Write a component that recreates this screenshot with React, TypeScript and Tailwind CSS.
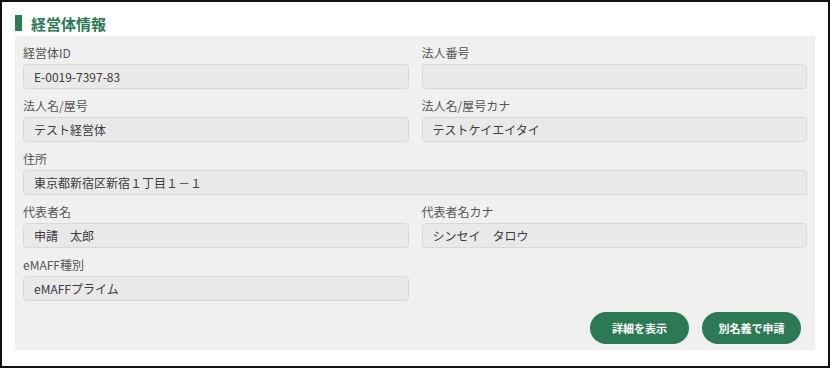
import React from 'react';

const font = { fontFamily: '"Noto Sans CJK JP", "Noto Sans", sans-serif' };

const Field: React.FC<{ label: string; value: string; full?: boolean }> = ({ label, value, full }) => (
  <div className={full ? 'col-span-2' : ''}>
    <div className="h-[20px] text-[12px] leading-[18px] text-[#555]">{label}</div>
    <div className="h-[25px] rounded-[4px] border border-[#d9d9d9] bg-[#e9e9ea] px-[10px] text-[12px] leading-[23px] text-[#3c3c3c] whitespace-pre">
      {value}
    </div>
  </div>
);

export default function App() {
  return (
    <div className="w-[830px] h-[368px] border-2 border-[#111] bg-white px-[13px] pt-[8px]" style={font}>
      {/* Section title */}
      <div className="flex items-center h-[26px]">
        <span className="w-[7px] h-[16px] bg-[#2b7d55]" />
        <h2 className="ml-[9px] text-[15px] font-bold text-[#2b7a53] leading-none">経営体情報</h2>
      </div>

      {/* Info panel */}
      <div className="h-[314px] bg-[#f0f0f0] px-[8px] pt-[8px]">
        <div className="grid grid-cols-2 gap-x-[13px] gap-y-[8px]">
          <Field label="経営体ID" value="E-0019-7397-83" />
          <Field label="法人番号" value="" />
          <Field label="法人名/屋号" value="テスト経営体" />
          <Field label="法人名/屋号カナ" value="テストケイエイタイ" />
          <Field label="住所" value="東京都新宿区新宿１丁目１－１" full />
          <Field label="代表者名" value="申請　太郎" />
          <Field label="代表者名カナ" value="シンセイ　タロウ" />
          <Field label="eMAFF種別" value="eMAFFプライム" />
        </div>

        <div className="flex justify-end gap-[13px] mt-[11px] pr-[6px]">
          <button className="w-[99px] h-[32px] rounded-full bg-[#2b7a53] text-white text-[11px] font-bold">
            詳細を表示
          </button>
          <button className="w-[99px] h-[32px] rounded-full bg-[#2b7a53] text-white text-[11px] font-bold">
            別名義で申請
          </button>
        </div>
      </div>
    </div>
  );
}
